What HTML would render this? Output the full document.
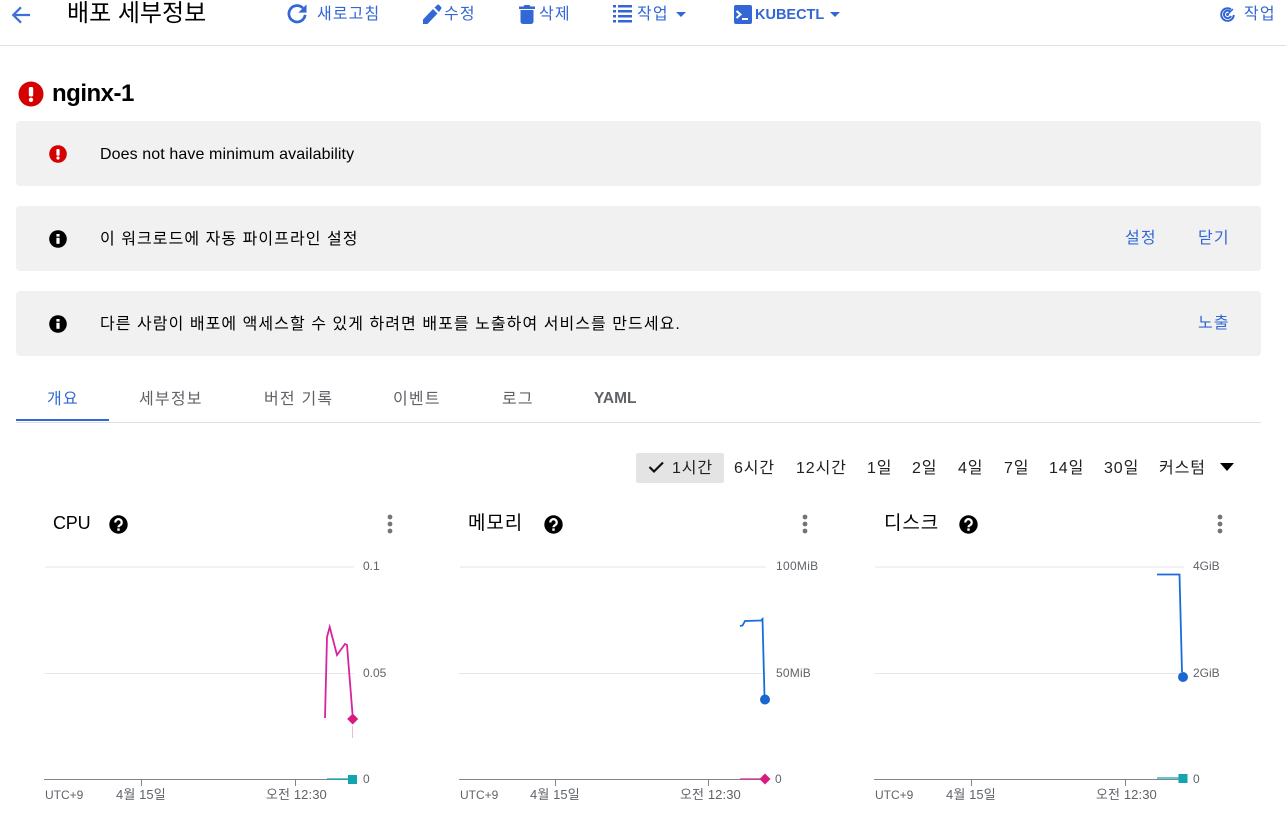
<!DOCTYPE html>
<html lang="ko"><head><meta charset="utf-8"><title>배포 세부정보</title>
<style>
html,body{margin:0;padding:0;background:#fff;width:1286px;height:815px;overflow:hidden}
body{position:relative;font-family:"Liberation Sans","Noto Sans CJK KR",sans-serif;color:#000}
.t{position:absolute;white-space:nowrap;line-height:20px;height:20px}
.b{color:#3367d6;font-size:16px;letter-spacing:1.1px}
.banner{position:absolute;left:16px;width:1245px;height:65px;background:#f1f1f1;border-radius:4px}
.m{font-size:16px;letter-spacing:1.05px;color:#000}
.tab{color:#5f6368;font-size:16px;letter-spacing:1.2px}
.r{font-size:16px;color:#202124;letter-spacing:.9px}
.ax{font-size:12px;color:#5f6368}
.kx{font-size:13px;color:#5f6368;letter-spacing:.1px}
svg{position:absolute;overflow:visible}
.ttl{font-size:19px;color:#000;letter-spacing:.9px}
</style></head><body>

<!-- top bar -->
<div style="position:absolute;left:0;top:45px;width:1286px;height:1px;background:#e0e0e0"></div>
<svg style="left:11px;top:5px" width="20" height="20" viewBox="0 0 22 22"><path d="M21 11H3M11 2.500L2.500 11l8.500 8.500" fill="none" stroke="#3f6fd8" stroke-width="2.500"/></svg>
<span class="t" style="left:67px;top:1px;font-size:24px;line-height:26px;height:26px;color:#000">배포 세부정보</span>

<svg style="left:287px;top:3px" width="20" height="21" viewBox="0 0 22 22"><path d="M17.500 5A9 9 0 1 0 20 12.500" fill="none" stroke="#3367d6" stroke-width="3"/><path d="M21.500 1v9h-9z" fill="#3367d6"/></svg>
<span class="t b" style="left:317px;top:5px">새로고침</span>
<svg style="left:422px;top:4px" width="20" height="20" viewBox="0 0 20 20"><path fill="#3367d6" d="M1 15.500V20h4.500L15.500 9.500l-4.500-4.500zM19 5a1.400 1.400 0 0 0 0-2L17.200 1a1.400 1.400 0 0 0-2 0l-2.700 2.500 4.500 4.500z"/></svg>
<span class="t b" style="left:444px;top:5px">수정</span>
<svg style="left:519px;top:4px" width="16" height="20" viewBox="0 0 16 20"><path fill="#3367d6" d="M1.500 6h13v11.500A2.500 2.500 0 0 1 12 20H4a2.500 2.500 0 0 1-2.500-2.500zM0 2.500h4.500L5.500 1h5l1 1.500H16v2.500H0z"/></svg>
<span class="t b" style="left:539px;top:5px">삭제</span>
<svg style="left:613px;top:5px" width="19" height="18" viewBox="0 0 19 18"><path fill="#3367d6" d="M0 0h3v2.500H0zM5 0h14v2.500H5zM0 5h3v2.500H0zM5 5h14v2.500H5zM0 10h3v2.500H0zM5 10h14v2.500H5zM0 15h3v2.500H0zM5 15h14v2.500H5z"/></svg>
<span class="t b" style="left:637px;top:5px">작업</span>
<svg style="left:676px;top:12px" width="10" height="5" viewBox="0 0 10 5"><path fill="#3367d6" d="M0 0h10L5 5z"/></svg>

<svg style="left:734px;top:5px" width="18" height="19" viewBox="0 0 18 19"><rect width="18" height="19" rx="2" fill="#3367d6"/><path d="M2.500 6l4 3.500-4 3.500" fill="none" stroke="#fff" stroke-width="2"/><path d="M8 14h6" stroke="#fff" stroke-width="2"/></svg>
<span class="t b" style="left:755px;top:5px;font-size:14.500px;font-weight:bold;letter-spacing:0">KUBECTL</span>
<svg style="left:830px;top:12px" width="10" height="5" viewBox="0 0 10 5"><path fill="#3367d6" d="M0 0h10L5 5z"/></svg>

<svg style="left:1220px;top:7px" width="15" height="15" viewBox="0 0 15 15"><g fill="none" stroke="#3367d6" stroke-width="2"><path d="M11 2.300A6.300 6.300 0 1 0 13.800 8"/><path d="M10.500 5A3.700 3.700 0 1 0 11 9"/></g><circle cx="7.500" cy="7.500" r="1.500" fill="#3367d6"/><path d="M8 7l5-5" stroke="#3367d6" stroke-width="1.500"/></svg>
<span class="t b" style="left:1244px;top:5px">작업</span>

<!-- title -->
<svg style="left:18px;top:81px" width="26" height="26" viewBox="0 0 26 26"><circle cx="13" cy="13" r="12.500" fill="#d50000"/><rect x="10.800" y="6" width="4.400" height="9.500" rx="1.500" fill="#fff"/><circle cx="13" cy="18.800" r="2.200" fill="#fff"/></svg>
<span class="t" style="left:52px;top:81px;font-size:24px;line-height:26px;height:26px;font-weight:bold;color:#000;letter-spacing:-.5px">nginx-1</span>

<!-- banners -->
<div class="banner" style="top:121px"></div>
<div class="banner" style="top:206px"></div>
<div class="banner" style="top:291px"></div>

<svg style="left:49px;top:145px" width="18" height="18" viewBox="0 0 18 18"><circle cx="9" cy="9" r="8.800" fill="#d50000"/><rect x="7.400" y="4" width="3.200" height="6.800" rx="1" fill="#fff"/><circle cx="9" cy="13" r="1.600" fill="#fff"/></svg>
<span class="t" style="left:100px;top:145px;font-size:16px;letter-spacing:.1px;color:#000">Does not have minimum availability</span>

<svg style="left:49px;top:230px" width="18" height="18" viewBox="0 0 18 18"><circle cx="9" cy="9" r="8.800" fill="#000"/><rect x="7.400" y="7.800" width="3.200" height="6" fill="#fff"/><rect x="7.400" y="4" width="3.200" height="2.600" fill="#fff"/></svg>
<span class="t m" style="left:100px;top:230px">이 워크로드에 자동 파이프라인 설정</span>
<span class="t b" style="left:1125px;top:229px">설정</span>
<span class="t b" style="left:1198px;top:229px">닫기</span>

<svg style="left:49px;top:315px" width="18" height="18" viewBox="0 0 18 18"><circle cx="9" cy="9" r="8.800" fill="#000"/><rect x="7.400" y="7.800" width="3.200" height="6" fill="#fff"/><rect x="7.400" y="4" width="3.200" height="2.600" fill="#fff"/></svg>
<span class="t m" style="left:100px;top:315px">다른 사람이 배포에 액세스할 수 있게 하려면 배포를 노출하여 서비스를 만드세요.</span>
<span class="t b" style="left:1198px;top:314px">노출</span>

<!-- tabs -->
<span class="t tab" style="left:47px;top:390px;color:#3367d6">개요</span>
<span class="t tab" style="left:139px;top:390px">세부정보</span>
<span class="t tab" style="left:264px;top:390px">버전 기록</span>
<span class="t tab" style="left:393px;top:390px">이벤트</span>
<span class="t tab" style="left:502px;top:390px">로그</span>
<span class="t tab" style="left:594px;top:389px;font-size:15.500px;letter-spacing:0;font-weight:bold">YAML</span>
<div style="position:absolute;left:16px;top:422px;width:1245px;height:1px;background:#e0e0e0"></div>
<div style="position:absolute;left:16px;top:419px;width:93px;height:2px;background:#3367d6"></div>

<!-- time range -->
<div style="position:absolute;left:636px;top:453px;width:88px;height:30px;background:#e4e4e4;border-radius:2px"></div>
<svg style="left:648px;top:460px" width="17" height="14" viewBox="0 0 17 14"><path d="M1.500 7l4.500 4.500L15 2.500" fill="none" stroke="#111" stroke-width="2.200"/></svg>
<span class="t r" style="left:672px;top:459px">1시간</span>
<span class="t r" style="left:734px;top:459px">6시간</span>
<span class="t r" style="left:796px;top:459px">12시간</span>
<span class="t r" style="left:867px;top:459px">1일</span>
<span class="t r" style="left:912px;top:459px">2일</span>
<span class="t r" style="left:958px;top:459px">4일</span>
<span class="t r" style="left:1004px;top:459px">7일</span>
<span class="t r" style="left:1049px;top:459px">14일</span>
<span class="t r" style="left:1104px;top:459px">30일</span>
<span class="t r" style="left:1159px;top:459px">커스텀</span>
<svg style="left:1220px;top:463px" width="14" height="8" viewBox="0 0 14 8"><path d="M0 0h14L7 8z" fill="#000"/></svg>

<!-- CPU chart -->
<span class="t ttl" style="left:53px;top:513px;font-size:18px;letter-spacing:-.2px">CPU</span>
<svg style="left:109px;top:515px" width="19" height="19" viewBox="0 0 19 19"><circle cx="9.500" cy="9.500" r="9.200" fill="#000"/><path d="M6.300 7.500a3.200 3.200 0 1 1 5 2.500c-1.100.7-1.800 1.100-1.800 2.300" fill="none" stroke="#fff" stroke-width="2.200"/><rect x="8.300" y="13.400" width="2.400" height="2.400" fill="#fff"/></svg>
<svg style="left:387px;top:514px" width="6" height="20" viewBox="0 0 6 20"><circle cx="3" cy="3" r="2.400" fill="#757575"/><circle cx="3" cy="10" r="2.400" fill="#757575"/><circle cx="3" cy="17" r="2.400" fill="#757575"/></svg>
<svg style="left:0;top:0" width="430" height="815" viewBox="0 0 430 815">
<path d="M45 567h309" stroke="#eeeeee" stroke-width="1.500" fill="none"/>
<path d="M44 673.500h310" stroke="#e8e8e8" fill="none"/>
<path d="M44 779.500h310" stroke="#80868b" stroke-width="1" fill="none"/>
<path d="M141.500 780v6M295.500 780v6" stroke="#80868b" fill="none"/>
<path d="M325 718L327 637L329.700 627L337 655L345 644L347 645L352.500 714" fill="none" stroke="#d6249f" stroke-width="1.800"/>
<path d="M352.500 726v12" stroke="#f3b6da" fill="none"/>
<path d="M352.700 713.500l5.500 5.500-5.500 5.500-5.500-5.500z" fill="#d81b80"/>
<path d="M327 779h22" stroke="#12a4af" stroke-width="1.200" fill="none"/>
<rect x="348" y="775" width="9" height="9" fill="#12a4af"/>
</svg>
<span class="t ax" style="left:363px;top:556px">0.1</span>
<span class="t ax" style="left:363px;top:663px">0.05</span>
<span class="t ax" style="left:363px;top:769px">0</span>
<span class="t ax" style="left:45px;top:785px">UTC+9</span>
<span class="t kx" style="left:116px;top:785px">4월 15일</span>
<span class="t kx" style="left:266px;top:785px">오전 12:30</span>

<!-- Memory chart -->
<span class="t ttl" style="left:468px;top:514px">메모리</span>
<svg style="left:544px;top:515px" width="19" height="19" viewBox="0 0 19 19"><circle cx="9.500" cy="9.500" r="9.200" fill="#000"/><path d="M6.300 7.500a3.200 3.200 0 1 1 5 2.500c-1.100.7-1.800 1.100-1.800 2.300" fill="none" stroke="#fff" stroke-width="2.200"/><rect x="8.300" y="13.400" width="2.400" height="2.400" fill="#fff"/></svg>
<svg style="left:802px;top:514px" width="6" height="20" viewBox="0 0 6 20"><circle cx="3" cy="3" r="2.400" fill="#757575"/><circle cx="3" cy="10" r="2.400" fill="#757575"/><circle cx="3" cy="17" r="2.400" fill="#757575"/></svg>
<svg style="left:430px;top:0" width="430" height="815" viewBox="0 0 430 815">
<path d="M30 567h306" stroke="#eeeeee" stroke-width="1.500" fill="none"/>
<path d="M29 673.500h307" stroke="#e8e8e8" fill="none"/>
<path d="M29 779.500h307" stroke="#80868b" fill="none"/>
<path d="M125.500 780v6M278.500 780v6" stroke="#80868b" fill="none"/>
<path d="M310 626L312.500 625.500L315 621L331 620.500L332.500 619L334.500 696" fill="none" stroke="#1a6cdc" stroke-width="1.800"/>
<circle cx="335" cy="699.500" r="5" fill="#1a67d2"/>
<path d="M310 779h20" stroke="#d6249f" stroke-width="1.200" fill="none"/>
<path d="M335 773.500l5.500 5.500-5.500 5.500-5.500-5.500z" fill="#d81b80"/>
</svg>
<span class="t ax" style="left:776px;top:556px;letter-spacing:.3px">100MiB</span>
<span class="t ax" style="left:776px;top:663px;letter-spacing:.2px">50MiB</span>
<span class="t ax" style="left:775px;top:769px">0</span>
<span class="t ax" style="left:460px;top:785px">UTC+9</span>
<span class="t kx" style="left:530px;top:785px">4월 15일</span>
<span class="t kx" style="left:680px;top:785px">오전 12:30</span>

<!-- Disk chart -->
<span class="t ttl" style="left:884px;top:514px">디스크</span>
<svg style="left:959px;top:515px" width="19" height="19" viewBox="0 0 19 19"><circle cx="9.500" cy="9.500" r="9.200" fill="#000"/><path d="M6.300 7.500a3.200 3.200 0 1 1 5 2.500c-1.100.7-1.800 1.100-1.800 2.300" fill="none" stroke="#fff" stroke-width="2.200"/><rect x="8.300" y="13.400" width="2.400" height="2.400" fill="#fff"/></svg>
<svg style="left:1217px;top:514px" width="6" height="20" viewBox="0 0 6 20"><circle cx="3" cy="3" r="2.400" fill="#757575"/><circle cx="3" cy="10" r="2.400" fill="#757575"/><circle cx="3" cy="17" r="2.400" fill="#757575"/></svg>
<svg style="left:856px;top:0" width="430" height="815" viewBox="0 0 430 815">
<path d="M19 567h309" stroke="#eeeeee" stroke-width="1.500" fill="none"/>
<path d="M18 673.500h309" stroke="#e8e8e8" fill="none"/>
<path d="M18 779.500h309" stroke="#80868b" fill="none"/>
<path d="M115.500 780v6M269.500 780v6" stroke="#80868b" fill="none"/>
<path d="M301 574.500H323.500L326 672" fill="none" stroke="#1a6cdc" stroke-width="1.800"/>
<circle cx="327" cy="677" r="5" fill="#1a67d2"/>
<path d="M301 778h22" stroke="#12a4af" stroke-width="1.200" fill="none"/>
<rect x="322.500" y="774" width="9" height="9" fill="#12a4af"/>
</svg>
<span class="t ax" style="left:1193px;top:556px">4GiB</span>
<span class="t ax" style="left:1193px;top:663px">2GiB</span>
<span class="t ax" style="left:1193px;top:769px">0</span>
<span class="t ax" style="left:875px;top:785px">UTC+9</span>
<span class="t kx" style="left:946px;top:785px">4월 15일</span>
<span class="t kx" style="left:1096px;top:785px">오전 12:30</span>

</body></html>
